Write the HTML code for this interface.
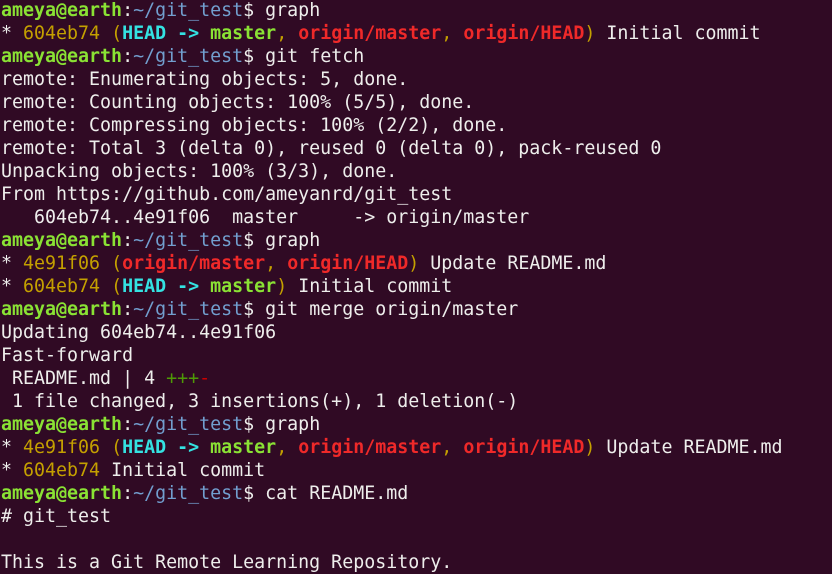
<!DOCTYPE html><html><head><style>
html,body{margin:0;padding:0;background:#300a24;width:832px;height:572px;overflow:hidden}
pre{margin:0;padding:0 0 0 1px;position:absolute;top:-1px;left:0;font-family:"DejaVu Sans Mono","Liberation Mono",monospace;font-size:18.3px;line-height:23px;color:#eeeeec;white-space:pre}
.g{color:#8ae234;font-weight:bold}.b{color:#729fcf}.y{color:#c4a000}.c{color:#34e2e2;font-weight:bold}.r{color:#ef2929;font-weight:bold}.gn{color:#4e9a06}.rd{color:#cc0000}
</style></head><body><pre><span class="g">ameya@earth</span>:<span class="b">~/git_test</span>$ graph
* <span class="y">604eb74 (</span><span class="c">HEAD -&gt; </span><span class="g">master</span><span class="y">, </span><span class="r">origin/master</span><span class="y">, </span><span class="r">origin/HEAD</span><span class="y">)</span> Initial commit
<span class="g">ameya@earth</span>:<span class="b">~/git_test</span>$ git fetch
remote: Enumerating objects: 5, done.
remote: Counting objects: 100% (5/5), done.
remote: Compressing objects: 100% (2/2), done.
remote: Total 3 (delta 0), reused 0 (delta 0), pack-reused 0
Unpacking objects: 100% (3/3), done.
From https://github.com/ameyanrd/git_test
   604eb74..4e91f06  master     -&gt; origin/master
<span class="g">ameya@earth</span>:<span class="b">~/git_test</span>$ graph
* <span class="y">4e91f06 (</span><span class="r">origin/master</span><span class="y">, </span><span class="r">origin/HEAD</span><span class="y">)</span> Update README.md
* <span class="y">604eb74 (</span><span class="c">HEAD -&gt; </span><span class="g">master</span><span class="y">)</span> Initial commit
<span class="g">ameya@earth</span>:<span class="b">~/git_test</span>$ git merge origin/master
Updating 604eb74..4e91f06
Fast-forward
 README.md | 4 <span class="gn">+++</span><span class="rd">-</span>
 1 file changed, 3 insertions(+), 1 deletion(-)
<span class="g">ameya@earth</span>:<span class="b">~/git_test</span>$ graph
* <span class="y">4e91f06 (</span><span class="c">HEAD -&gt; </span><span class="g">master</span><span class="y">, </span><span class="r">origin/master</span><span class="y">, </span><span class="r">origin/HEAD</span><span class="y">)</span> Update README.md
* <span class="y">604eb74</span> Initial commit
<span class="g">ameya@earth</span>:<span class="b">~/git_test</span>$ cat README.md
# git_test

This is a Git Remote Learning Repository.
</pre></body></html>
